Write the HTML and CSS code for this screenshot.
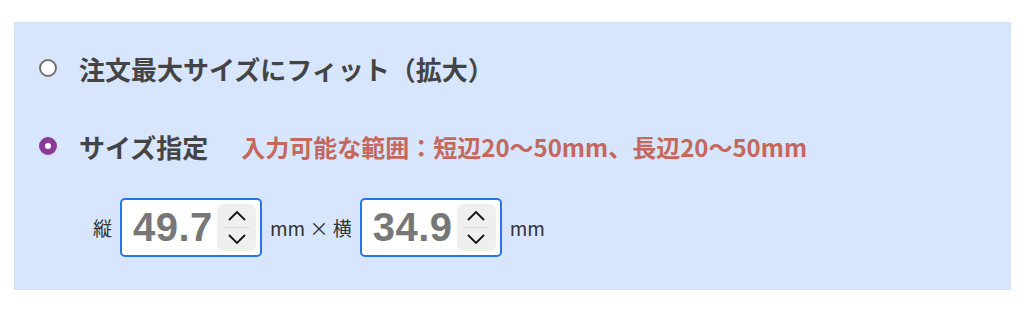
FILE: index.html
```html
<!DOCTYPE html>
<html lang="ja">
<head>
  <meta charset="UTF-8">
  <title>サイズ指定</title>
  <link rel="stylesheet" href="styles.css">
</head>
<body>
  <section class="panel">
    <div class="option">
      <span class="radio"></span>
      <span class="option-label">注文最大サイズにフィット（拡大）</span>
    </div>

    <div class="option option-size">
      <span class="radio checked"></span>
      <span class="option-label">サイズ指定</span>
      <span class="note">入力可能な範囲：短辺20〜50mm、長辺20〜50mm</span>
    </div>

    <div class="size-row">
      <span class="unit">縦</span>
      <div class="num-box">
        <span class="num-value">49.7</span>
        <div class="spinner">
          <svg width="20" height="12" viewBox="0 0 20 12"><path d="M2 10 L10 2 L18 10" /></svg>
          <span class="spin-line"></span>
          <svg width="20" height="12" viewBox="0 0 20 12"><path d="M2 2 L10 10 L18 2" /></svg>
        </div>
      </div>
      <span class="unit">mm × 横</span>
      <div class="num-box">
        <span class="num-value">34.9</span>
        <div class="spinner">
          <svg width="20" height="12" viewBox="0 0 20 12"><path d="M2 10 L10 2 L18 10" /></svg>
          <span class="spin-line"></span>
          <svg width="20" height="12" viewBox="0 0 20 12"><path d="M2 2 L10 10 L18 2" /></svg>
        </div>
      </div>
      <span class="unit">mm</span>
    </div>
  </section>
</body>
</html>
```

FILE: styles.css
```css
body {
  margin: 0;
  background: #fff;
  font-family: "Liberation Sans", "Noto Sans CJK JP", sans-serif;
}

/* 青いパネル */
.panel {
  margin: 22px 13px 0 14px;
  padding: 27px 24px 32px;
  background: #d7e6fc;
  border: 1px solid #d0e0f7;
  box-sizing: border-box;
}

/* ラジオ行 */
.option {
  display: flex;
  align-items: center;
  height: 36px;
}
.option-size {
  margin-top: 42px;
}
.radio {
  width: 18px;
  height: 18px;
  box-sizing: border-box;
  border-radius: 50%;
  border: 2px solid #707070;
  background: #fff;
  margin-right: 22px;
  flex-shrink: 0;
}
.radio.checked {
  border: 6px solid #8a3a97;
  background: #fff;
}
.option-label {
  font-family: "Noto Sans CJK JP", sans-serif;
  font-size: 26px;
  font-weight: bold;
  color: #444;
}
.note {
  margin-left: 33px;
  font-family: "Noto Sans CJK JP", sans-serif;
  font-size: 24px;
  font-weight: bold;
  color: #c4675d;
}

/* 数値入力 */
.size-row {
  display: flex;
  align-items: center;
  gap: 8px;
  margin-top: 34px;
  padding-left: 54px;
  height: 59px;
}
.unit {
  font-family: "Noto Sans CJK JP", sans-serif;
  font-size: 19px;
  color: #333;
}
.num-box {
  display: flex;
  align-items: center;
  justify-content: space-between;
  width: 142px;
  height: 59px;
  box-sizing: border-box;
  padding: 0 4px 0 11px;
  background: #fff;
  border: 2px solid #2377ec;
  border-radius: 5px;
}
.num-value {
  font-size: 40px;
  font-weight: bold;
  color: #777;
  letter-spacing: 0.5px;
}
.spinner {
  display: flex;
  flex-direction: column;
  align-items: center;
  justify-content: center;
  gap: 5px;
  width: 39px;
  height: 47px;
  background: #efefef;
  border-radius: 7px;
}
.spinner svg path {
  fill: none;
  stroke: #111;
  stroke-width: 1.8;
}
.spin-line {
  width: 26px;
  height: 1px;
  background: #ddd;
}
```
